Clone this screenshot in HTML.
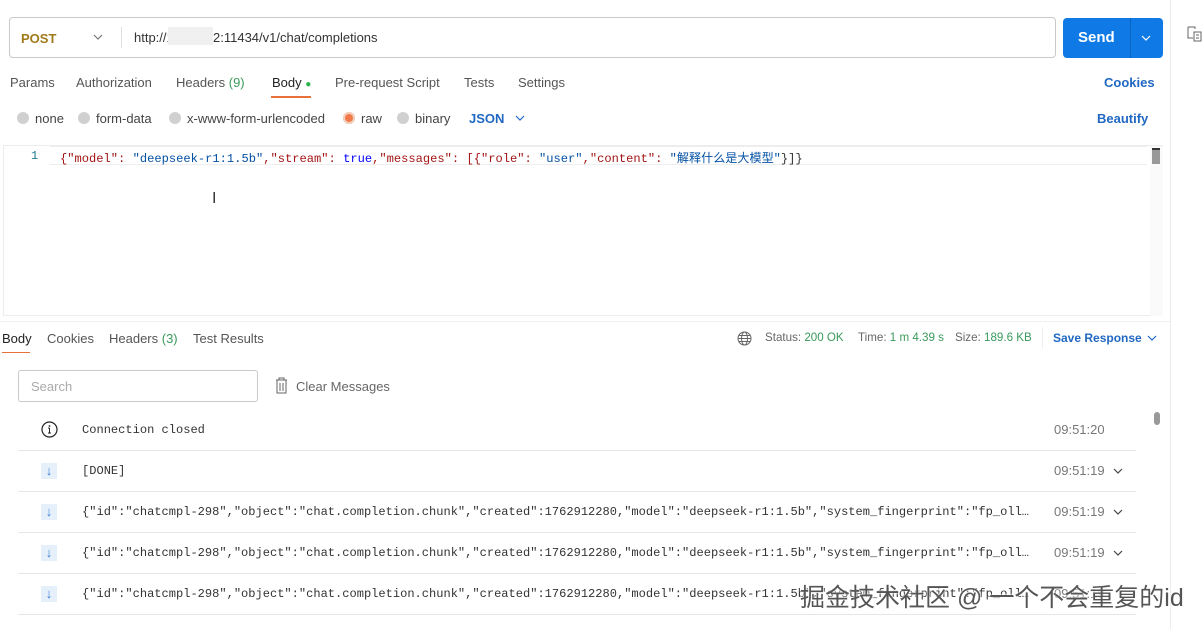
<!DOCTYPE html>
<html><head><meta charset="utf-8"><style>
*{margin:0;padding:0;box-sizing:border-box}
body{width:1204px;height:629px;overflow:hidden;background:#fff;font-family:"Liberation Sans","Noto Sans CJK SC",sans-serif;font-size:13px;color:#555;position:relative}
.a{position:absolute;white-space:nowrap}
.mono{font-family:"Liberation Mono","Noto Sans CJK SC",monospace}
.rad{display:inline-block;width:12px;height:12px;border-radius:50%;background:#d0d0d0;vertical-align:-1px;margin-right:6px}
.row{position:absolute;left:18px;width:1118px;height:41px;border-bottom:1px solid #e6e6e6}
.row .ic{position:absolute;left:23px;top:12px;width:16px;height:16px;background:#e6f0fb;color:#3b7fd4;font-size:13px;text-align:center;line-height:16px}
.row .tx{position:absolute;left:64px;top:13px;font-size:12.05px;color:#333}
.row .tm{position:absolute;left:1036px;top:12px;color:#777;font-size:13px}
.row .cv{position:absolute;left:1094px;top:10px}
</style></head><body>
<div class="a" style="left:9px;top:17px;width:1047px;height:41px;border:1px solid #c9c9c9;border-radius:4px"></div>
<div class="a" style="left:21px;top:31px;color:#a07a1a;font-weight:bold;font-size:13px">POST</div>
<svg class="a" style="left:92px;top:33px" width="12" height="8"><path d="M2 2l4 4 4-4" fill="none" stroke="#777" stroke-width="1.2"/></svg>
<div class="a" style="left:121px;top:27px;width:1px;height:21px;background:#e0e0e0"></div>
<div class="a" style="left:134px;top:30px;color:#333">http://12.</div>
<div class="a" style="left:168px;top:27px;width:45px;height:18px;background:#f0f0f0"></div>
<div class="a" style="left:213px;top:30px;color:#333">2:11434/v1/chat/completions</div>
<div class="a" style="left:1063px;top:18px;width:100px;height:40px;background:#0f7ae5;border-radius:4px"></div>
<div class="a" style="left:1078px;top:29px;color:#fff;font-weight:bold;font-size:15px">Send</div>
<div class="a" style="left:1130px;top:18px;width:1px;height:40px;background:#0b66c2"></div>
<svg class="a" style="left:1140px;top:34px" width="12" height="8"><path d="M2 2l4 4 4-4" fill="none" stroke="#fff" stroke-width="1.2"/></svg>
<div class="a" style="left:1170px;top:0;width:1px;height:629px;background:#ececec"></div>
<svg class="a" style="left:1187px;top:26px" width="16" height="16"><path d="M1 1h7v2M1 1v11h5M7 6h7v9H7z M9 9h3M9 12h3" fill="none" stroke="#666" stroke-width="1"/></svg>
<div class="a" style="left:10px;top:75px">Params</div>
<div class="a" style="left:76px;top:75px">Authorization</div>
<div class="a" style="left:176px;top:75px">Headers <span style="color:#3a9a5b">(9)</span></div>
<div class="a" style="left:272px;top:75px;color:#222">Body <span style="color:#2bb24c;font-size:10px">●</span></div>
<div class="a" style="left:271px;top:96px;width:40px;height:2px;background:#e8703a"></div>
<div class="a" style="left:335px;top:75px">Pre-request Script</div>
<div class="a" style="left:464px;top:75px">Tests</div>
<div class="a" style="left:518px;top:75px">Settings</div>
<div class="a" style="left:1104px;top:75px;color:#2168c2;font-weight:bold">Cookies</div>
<div class="a" style="left:17px;top:111px;color:#444"><span class="rad"></span>none</div>
<div class="a" style="left:78px;top:111px;color:#444"><span class="rad"></span>form-data</div>
<div class="a" style="left:169px;top:111px;color:#444"><span class="rad"></span>x-www-form-urlencoded</div>
<div class="a" style="left:343px;top:111px;color:#444"><span class="rad" style="background:#f27a4a;box-shadow:0 0 0 2px #f2d0c0 inset"></span>raw</div>
<div class="a" style="left:397px;top:111px;color:#444"><span class="rad"></span>binary</div>
<div class="a" style="left:469px;top:111px;color:#2168c2;font-weight:bold">JSON</div>
<svg class="a" style="left:514px;top:114px" width="12" height="8"><path d="M2 2l4 4 4-4" fill="none" stroke="#2168c2" stroke-width="1.2"/></svg>
<div class="a" style="left:1097px;top:111px;color:#2168c2;font-weight:bold">Beautify</div>
<div class="a" style="left:3px;top:145px;width:1160px;height:171px;border:1px solid #ececec;border-right:none"></div>
<div class="a" style="left:50px;top:146px;width:1097px;height:19px;border-top:1px solid #eee;border-bottom:1px solid #eee"></div>
<div class="a" style="left:1150px;top:146px;width:13px;height:170px;background:#fafafa"></div>
<div class="a" style="left:1152px;top:148px;width:8px;height:16px;background:#999;border-top:2px solid #333"></div>
<div class="a mono" style="left:31px;top:149px;font-size:12px;color:#237893">1</div>
<div class="a mono" style="left:60px;top:149px;font-size:12.1px;color:#a31515">{"model": <span style="color:#0451a5">"deepseek-r1:1.5b"</span>,"stream": <span style="color:#0000ff">true</span>,"messages": [{"role": <span style="color:#0451a5">"user"</span>,"content": <span style="color:#0451a5">"解释什么是大模型"</span><span style="color:#333">}]}</span></div>
<div class="a" style="left:212px;top:190px;color:#333;font-size:16px">I</div>
<div class="a" style="left:0;top:321px;width:1170px;height:1px;background:#efefef"></div>
<div class="a" style="left:2px;top:331px;color:#222">Body</div>
<div class="a" style="left:2px;top:352px;width:28px;height:1px;background:#e8703a"></div>
<div class="a" style="left:47px;top:331px">Cookies</div>
<div class="a" style="left:109px;top:331px">Headers <span style="color:#3a9a5b">(3)</span></div>
<div class="a" style="left:193px;top:331px">Test Results</div>
<svg class="a" style="left:737px;top:331px" width="15" height="15"><circle cx="7.5" cy="7.5" r="6.5" fill="none" stroke="#666"/><ellipse cx="7.5" cy="7.5" rx="3" ry="6.5" fill="none" stroke="#666"/><path d="M1 7.5h13M2 4.5h11M2 10.5h11" stroke="#666" fill="none"/></svg>
<div class="a" style="left:765px;top:331px;font-size:11.6px;color:#666">Status: <span style="color:#3a9a5b">200 OK</span></div>
<div class="a" style="left:858px;top:331px;font-size:11.6px;color:#666">Time: <span style="color:#3a9a5b">1 m 4.39 s</span></div>
<div class="a" style="left:955px;top:331px;font-size:11.6px;color:#666">Size: <span style="color:#3a9a5b">189.6 KB</span></div>
<div class="a" style="left:1042px;top:327px;width:1px;height:22px;background:#eee"></div>
<div class="a" style="left:1053px;top:331px;color:#2168c2;font-weight:bold;font-size:12px">Save Response</div>
<svg class="a" style="left:1146px;top:334px" width="12" height="8"><path d="M2 2l4 4 4-4" fill="none" stroke="#2168c2" stroke-width="1.2"/></svg>
<div class="a" style="left:18px;top:370px;width:240px;height:32px;border:1px solid #c9c9c9;border-radius:3px"></div>
<div class="a" style="left:31px;top:379px;color:#aaa">Search</div>
<svg class="a" style="left:274px;top:377px" width="16" height="17"><path d="M2 3h11M5 3V1h5v2M3 3v13h9V3M6 6v8M9 6v8" fill="none" stroke="#666" stroke-width="1"/></svg>
<div class="a" style="left:296px;top:379px;color:#666">Clear Messages</div>
<div class="row" style="top:410px">
<svg style="position:absolute;left:23px;top:11px" width="17" height="17"><circle cx="8.5" cy="8.5" r="7.5" fill="none" stroke="#222" stroke-width="1.2"/><path d="M8.5 7v5M7 12h3M7 7h1.5" stroke="#222" fill="none"/><circle cx="8.5" cy="5" r="0.9" fill="#222"/></svg>
<div class="tx mono">Connection closed</div><div class="tm">09:51:20</div></div>
<div class="row" style="top:451px"><div class="ic">↓</div><div class="tx mono">[DONE]</div><div class="tm">09:51:19</div><svg class="cv" width="12" height="20"><path d="M2 8l4 4 4-4" fill="none" stroke="#444" stroke-width="1.2"/></svg></div>
<div class="row" style="top:492px"><div class="ic">↓</div><div class="tx mono">{"id":"chatcmpl-298","object":"chat.completion.chunk","created":1762912280,"model":"deepseek-r1:1.5b","system_fingerprint":"fp_oll…</div><div class="tm">09:51:19</div><svg class="cv" width="12" height="20"><path d="M2 8l4 4 4-4" fill="none" stroke="#444" stroke-width="1.2"/></svg></div>
<div class="row" style="top:533px"><div class="ic">↓</div><div class="tx mono">{"id":"chatcmpl-298","object":"chat.completion.chunk","created":1762912280,"model":"deepseek-r1:1.5b","system_fingerprint":"fp_oll…</div><div class="tm">09:51:19</div><svg class="cv" width="12" height="20"><path d="M2 8l4 4 4-4" fill="none" stroke="#444" stroke-width="1.2"/></svg></div>
<div class="row" style="top:574px"><div class="ic">↓</div><div class="tx mono">{"id":"chatcmpl-298","object":"chat.completion.chunk","created":1762912280,"model":"deepseek-r1:1.5b","system_fingerprint":"fp_oll…</div><div class="tm">09:51:19</div></div>
<div class="a" style="left:1154px;top:412px;width:6px;height:13px;border-radius:3px;background:#999"></div>
<div class="a" style="left:800px;top:578px;font-size:25px;color:#555;text-shadow:0 0 2px #fff,0 0 2px #fff">掘金技术社区 @ 一个不会重复的id</div>
</body></html>
